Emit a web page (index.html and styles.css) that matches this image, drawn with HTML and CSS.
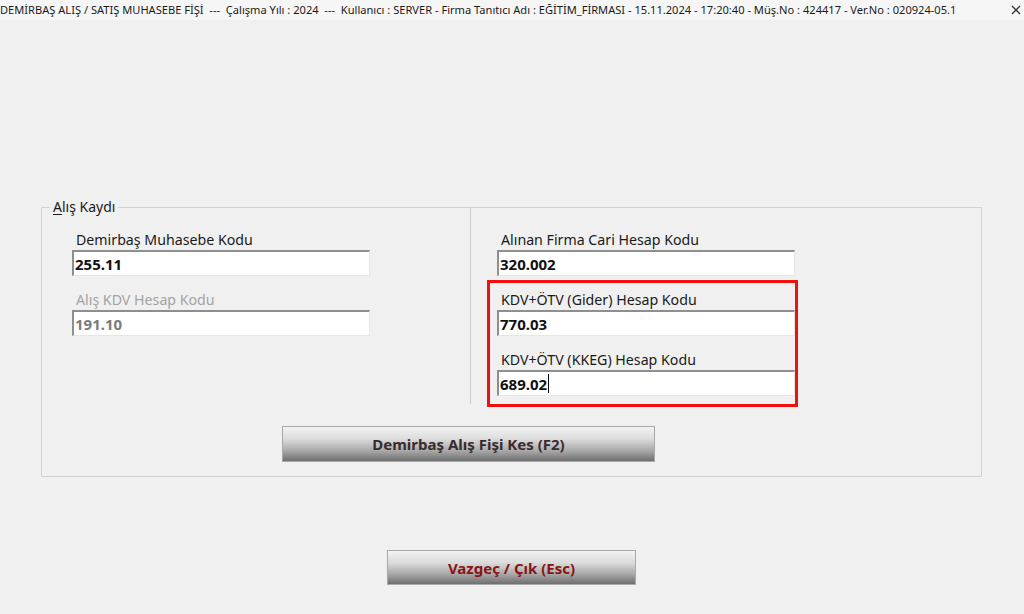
FILE: index.html
```html
<!DOCTYPE html>
<html lang="tr">
<head>
<meta charset="utf-8">
<title>Demirbaş Alış / Satış Muhasebe Fişi</title>
<link rel="stylesheet" href="styles.css">
</head>
<body>
<div class="titlebar">
  <span class="title">DEMİRBAŞ ALIŞ / SATIŞ MUHASEBE FİŞİ  ---  Çalışma Yılı : 2024  ---  Kullanıcı : SERVER - Firma Tanıtıcı Adı : EĞİTİM_FİRMASI - 15.11.2024 - 17:20:40 - Müş.No : 424417 - Ver.No : 020924-05.1</span>
  <svg class="close" width="10" height="10" viewBox="0 0 10 10"><path d="M1 1L9 9M9 1L1 9" stroke="#333" stroke-width="1.3" fill="none"/></svg>
</div>
<div class="group">
  <div class="legend"><u>A</u>lış Kaydı</div>
  <div class="group-body">
    <div class="col col-left">
      <div class="field">
        <div class="label">Demirbaş Muhasebe Kodu</div>
        <div class="input">255.11</div>
      </div>
      <div class="field">
        <div class="label disabled">Alış KDV Hesap Kodu</div>
        <div class="input disabled">191.10</div>
      </div>
    </div>
    <div class="divider"></div>
    <div class="col col-right">
      <div class="field">
        <div class="label">Alınan Firma Cari Hesap Kodu</div>
        <div class="input">320.002</div>
      </div>
      <div class="highlight">
        <div class="field">
          <div class="label">KDV+ÖTV (Gider) Hesap Kodu</div>
          <div class="input">770.03</div>
        </div>
        <div class="field">
          <div class="label">KDV+ÖTV (KKEG) Hesap Kodu</div>
          <div class="input">689.02<span class="caret"></span></div>
        </div>
      </div>
    </div>
  </div>
  <div class="btn btn-main">Demirbaş Alış Fişi Kes (F2)</div>
</div>
<div class="btn btn-cancel">Vazgeç / Çık (Esc)</div>
</body>
</html>
```
FILE: styles.css
```css
html, body {
  margin: 0;
  padding: 0;
}
body {
  width: 1024px;
  height: 614px;
  overflow: hidden;
  background: #f0f0f0;
  font-family: "Segoe UI", "Noto Sans", "Open Sans", sans-serif;
  color: #1a1a1a;
}
.titlebar {
  height: 20px;
  background: #f6f6f6;
  display: flex;
  align-items: center;
  justify-content: space-between;
  padding-right: 3px;
}
.title {
  white-space: pre;
  font-size: 11.1px;
  color: #1a1a1a;
  margin-left: 0;
  line-height: 18px;
}
.close {
  display: block;
}
.group {
  margin-top: 187px;
  margin-left: 41px;
  width: 941px;
  height: 270px;
  box-sizing: border-box;
  border: 1px solid #d2d2d2;
}
.legend {
  width: fit-content;
  margin-top: -10px;
  margin-left: 8px;
  padding: 0 3px;
  background: #f0f0f0;
  font-size: 14px;
  line-height: 18px;
  height: 18px;
}
.legend u {
  text-decoration-thickness: 1px;
  text-underline-offset: 2px;
}
.group-body {
  display: flex;
  align-items: flex-start;
  margin-top: -8px;
}
.col-left {
  width: 428px;
  padding-left: 30px;
  padding-top: 23px;
  box-sizing: border-box;
}
.col-right {
  padding-left: 16px;
  padding-top: 23px;
}
.col-right > .field {
  padding-left: 10px;
}
.divider {
  width: 1px;
  height: 196px;
  background: #cfcfcf;
}
.field + .field {
  margin-top: 15px;
}
.label {
  font-size: 14.2px;
  line-height: 18px;
  height: 18px;
  padding-left: 4px;
  margin-bottom: 1px;
  color: #1a1a1a;
}
.label.disabled {
  color: #a3a3a3;
}
.input {
  width: 298px;
  height: 26px;
  box-sizing: border-box;
  background: #ffffff;
  border-top: 2px solid #8e8e8e;
  border-left: 2px solid #8e8e8e;
  border-right: 1px solid #e6e6e6;
  border-bottom: 1px solid #e6e6e6;
  font-weight: bold;
  font-size: 15px;
  line-height: 22px;
  padding-left: 1px;
  color: #111;
  display: flex;
  align-items: center;
}
.input.disabled {
  color: #7b7b7b;
}
.caret {
  display: inline-block;
  width: 1px;
  height: 19px;
  background: #000;
  margin-left: 1px;
}
.highlight {
  margin-top: 4px;
  width: 311px;
  box-sizing: border-box;
  border: 3px solid #f01010;
  padding: 8px 0 8px 7px;
}
.highlight .input {
  width: 298px;
}
.btn {
  box-sizing: border-box;
  border: 1px solid #a9a9a9;
  background: linear-gradient(to bottom, #f2f2f2 0%, #dcdcdc 35%, #a8a8a8 70%, #6f6f6f 100%);
  font-weight: bold;
  font-size: 15px;
  display: flex;
  align-items: center;
  justify-content: center;
}
.btn-main {
  width: 373px;
  height: 36px;
  margin-top: 19px;
  margin-left: 240px;
  color: #3a2b2f;
}
.btn-cancel {
  width: 249px;
  height: 35px;
  margin-top: 73px;
  margin-left: 387px;
  color: #8a1414;
}
```
